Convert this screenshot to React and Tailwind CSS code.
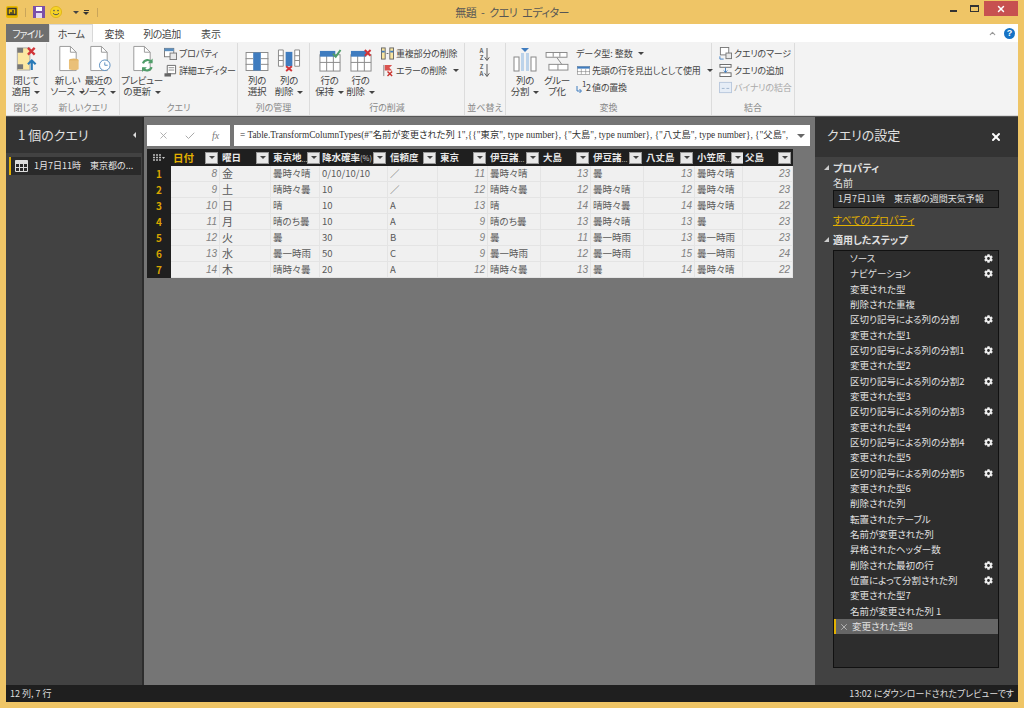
import { X, Check, ChevronUp } from 'lucide-react';
import { FaCog } from 'react-icons/fa';

const jp = '[font-family:"Noto_Sans_CJK_JP","Liberation_Sans",sans-serif] [font-feature-settings:"palt"]';

const colTemplate = 'grid-cols-[24px_49px_51px_49px_68px_50px_50px_53px_50px_53px_51px_48px_50px]';

const columns = [
    { name: '日付', active: true },
    { name: '曜日' },
    { name: '東京地', more: true },
    { name: '降水確率', unit: '(%)' },
    { name: '信頼度' },
    { name: '東京' },
    { name: '伊豆諸', more: true },
    { name: '大島' },
    { name: '伊豆諸', more: true },
    { name: '八丈島' },
    { name: '小笠原', more: true },
    { name: '父島' },
];

const rows = [
    [8, '金', '曇時々晴', '0/10/10/10', '／', 11, '曇時々晴', 13, '曇', 13, '曇時々晴', 23],
    [9, '土', '晴時々曇', '10', '／', 12, '晴時々曇', 12, '曇時々晴', 12, '曇時々晴', 23],
    [10, '日', '晴', '10', 'A', 13, '晴', 14, '晴時々曇', 14, '曇時々晴', 22],
    [11, '月', '晴のち曇', '10', 'A', 9, '晴のち曇', 13, '曇時々晴', 13, '曇', 23],
    [12, '火', '曇', '30', 'B', 9, '曇', 11, '曇一時雨', 13, '曇一時雨', 23],
    [13, '水', '曇一時雨', '50', 'C', 9, '曇一時雨', 12, '曇一時雨', 15, '曇一時雨', 24],
    [14, '木', '晴時々曇', '20', 'A', 12, '晴時々曇', 13, '曇', 14, '曇時々晴', 22],
];

const steps = [
    ['ソース', true],
    ['ナビゲーション', true],
    ['変更された型'],
    ['削除された重複'],
    ['区切り記号による列の分割', true],
    ['変更された型1'],
    ['区切り記号による列の分割1', true],
    ['変更された型2'],
    ['区切り記号による列の分割2', true],
    ['変更された型3'],
    ['区切り記号による列の分割3', true],
    ['変更された型4'],
    ['区切り記号による列の分割4', true],
    ['変更された型5'],
    ['区切り記号による列の分割5', true],
    ['変更された型6'],
    ['削除された列'],
    ['転置されたテーブル'],
    ['名前が変更された列'],
    ['昇格されたヘッダー数'],
    ['削除された最初の行', true],
    ['位置によって分割された列', true],
    ['変更された型7'],
    ['名前が変更された列 1'],
];

const Caret = ({ className = '' }) => (
    <span className={`inline-block ml-1 align-middle w-0 h-0 border-l-[3px] border-r-[3px] border-t-[3px] border-l-transparent border-r-transparent border-t-[#444] ${className}`} />
);

const GridIcon = ({ className = '', head = '#3f7cbf' }) => (
    <svg viewBox="0 0 24 16" className={className}>
        <rect x="0.5" y="0.5" width="23" height="15" fill="#fff" stroke="#777" />
        <rect x="0.5" y="0.5" width="23" height="4" fill={head} />
        <path d="M8 5v10M16 5v10M0 10h24" stroke="#777" fill="none" />
    </svg>
);

const PageIcon = ({ children }) => (
    <svg viewBox="0 0 24 28" className="w-[24px] h-[27px]">
        <path d="M3.5 1.5h11l6 6v19h-17z" fill="#fff" stroke="#999" />
        <path d="M14.5 1.5v6h6" fill="none" stroke="#999" />
        {children}
    </svg>
);

const BigButton = ({ icon, lines, caret, className = '' }) => (
    <div className={`flex flex-col items-center text-[9.5px] tracking-[-0.3px] leading-[11px] text-[#444] shrink-0 ${className}`}>
        <div className="h-[27px] flex items-end justify-center mb-[3px]">{icon}</div>
        <div className="whitespace-nowrap">{lines[0]}</div>
        <div className="whitespace-nowrap">{lines[1]}{caret && <Caret />}</div>
    </div>
);

const SmallButton = ({ icon, text, caret, muted }) => (
    <div className={`flex items-center h-[17px] gap-[2px] text-[9px] tracking-[-0.2px] whitespace-nowrap ${muted ? 'text-[#aaa]' : 'text-[#444]'}`}>
        <span className="w-[14px] h-[14px] flex items-center justify-center shrink-0">{icon}</span>
        <span>{text}</span>
        {caret && <Caret />}
    </div>
);

const Group = ({ label, width, children, last }) => (
    <div className={`flex flex-col shrink-0 h-[72px] ${last ? '' : 'border-r border-[#dcdcdc]'} ${width}`}>
        <div className="flex-1 flex pt-[2px] px-[3px] min-h-0">{children}</div>
        <div className="h-[14px] leading-[14px] text-center text-[9px] text-[#888]">{label}</div>
    </div>
);

const FilterButton = () => (
    <span className="ml-auto mr-[2px] w-[13px] h-[12px] bg-[#e8e8e8] border border-[#999] flex items-center justify-center shrink-0">
        <span className="w-0 h-0 border-l-[3px] border-r-[3px] border-t-[3px] border-l-transparent border-r-transparent border-t-[#444]" />
    </span>
);

const SortIcon = ({ top, bottom }) => (
    <div className="flex items-center gap-[1px]">
        <span className="flex flex-col items-center"><span>{top}</span><span>{bottom}</span></span>
        <svg viewBox="0 0 6 14" className="w-[6px] h-[13px]"><path d="M3 0v13M0.5 10L3 13.5 5.5 10" stroke="#555" fill="none" /></svg>
    </div>
);

const Ribbon = () => (
    <div className="flex h-[74px] bg-[#f3f3f3] border-b border-[#d8d8d8] pt-[1px]">
        <Group label="閉じる" width="w-[41px]">
            <BigButton
                className="w-full"
                lines={['閉じて', '適用']}
                caret
                icon={
                    <svg viewBox="0 0 24 28" className="w-[24px] h-[27px]">
                        <rect x="3" y="3" width="13" height="23" fill="#fbe7a1" stroke="#aaa" />
                        <rect x="3" y="3" width="6" height="5" fill="#777" />
                        <rect x="3" y="20" width="6" height="5" fill="#777" />
                        <path d="M14 3l7 7M21 3l-7 7" stroke="#d13438" strokeWidth="2.4" />
                        <path d="M18 26v-9M14 20l4-4 4 4" stroke="#2a7ab8" strokeWidth="2.2" fill="none" />
                    </svg>
                }
            />
        </Group>
        <Group label="新しいクエリ" width="w-[73px]">
            <div className="flex ml-[2px]">
                <BigButton
                    className="w-[31px]"
                    lines={['新しい', 'ソース']}
                    caret
                    icon={
                        <PageIcon>
                            <ellipse cx="18" cy="16" rx="5" ry="2" fill="#e3b566" />
                            <path d="M13 16v9c0 1.5 10 1.5 10 0v-9z" fill="#eac078" />
                        </PageIcon>
                    }
                />
                <BigButton
                    className="w-[31px]"
                    lines={['最近の', 'ソース']}
                    caret
                    icon={
                        <PageIcon>
                            <circle cx="18" cy="21" r="5.5" fill="#fff" stroke="#5b8fc0" />
                            <path d="M18 18v3h3" stroke="#5b8fc0" fill="none" />
                        </PageIcon>
                    }
                />
            </div>
        </Group>
        <Group label="クエリ" width="w-[118px]">
            <BigButton
                className="w-[38px]"
                lines={['プレビュー', 'の更新']}
                caret
                icon={
                    <PageIcon>
                        <path d="M13 19a5 5 0 0 1 9-1M22 23a5 5 0 0 1-9 1" fill="none" stroke="#4f9d69" strokeWidth="2.2" />
                        <path d="M23 14v5h-5zM12 28v-5h5z" fill="#4f9d69" />
                    </PageIcon>
                }
            />
            <div className="flex flex-col ml-[2px]">
                <SmallButton
                    text="プロパティ"
                    icon={
                        <svg viewBox="0 0 14 14" className="w-[13px] h-[13px]">
                            <rect x="0.5" y="1.5" width="10" height="9" fill="#fff" stroke="#777" />
                            <rect x="0.5" y="1.5" width="10" height="3" fill="#5b8fc0" />
                            <rect x="6.5" y="6.5" width="7" height="7" fill="#e8e8e8" stroke="#777" />
                        </svg>
                    }
                />
                <SmallButton
                    text="詳細エディター"
                    icon={
                        <svg viewBox="0 0 14 14" className="w-[13px] h-[13px]">
                            <path d="M3.5 1.5h9v9h-9z" fill="#fff" stroke="#666" />
                            <path d="M5 4h6M5 6.5h6" stroke="#888" />
                            <rect x="0.5" y="10" width="7" height="3.5" fill="#666" />
                        </svg>
                    }
                />
            </div>
        </Group>
        <Group label="列の管理" width="w-[72px]">
            <div className="flex">
                <BigButton
                    className="w-[32px]"
                    lines={['列の', '選択']}
                    icon={
                        <svg viewBox="0 0 24 20" className="w-[24px] h-[19px] mb-[1px]">
                            <rect x="0.5" y="0.5" width="23" height="19" fill="#fff" stroke="#888" />
                            <rect x="8" y="0.5" width="8" height="19" fill="#3f7cbf" />
                            <path d="M0 7h8M16 7h8M0 13h8M16 13h8" stroke="#888" />
                        </svg>
                    }
                />
                <BigButton
                    className="w-[32px]"
                    lines={['列の', '削除']}
                    caret
                    icon={
                        <svg viewBox="0 0 24 24" className="w-[24px] h-[23px]">
                            <path d="M1 1h5v17H1zM18 1h5v17h-5z" fill="#fff" stroke="#888" />
                            <path d="M1 7h5M1 12h5M18 7h5M18 12h5" stroke="#888" />
                            <rect x="8.5" y="3" width="7" height="15" fill="#3f7cbf" />
                            <path d="M9 18l6 5M15 18l-6 5" stroke="#d13438" strokeWidth="2" />
                        </svg>
                    }
                />
            </div>
        </Group>
        <Group label="行の削減" width="w-[155px]">
            <div className="flex ml-[1px]">
                <BigButton
                    className="w-[31px]"
                    lines={['行の', '保持']}
                    caret
                    icon={
                        <svg viewBox="0 0 24 24" className="w-[24px] h-[23px]">
                            <rect x="1.5" y="6" width="21" height="17" fill="#fff" stroke="#888" />
                            <path d="M8.5 6v17M15.5 6v17M1.5 14h21" stroke="#888" />
                            <rect x="1.5" y="2" width="16" height="6" fill="#3f7cbf" />
                            <path d="M15 5l3 3 5-7" stroke="#4f9d69" strokeWidth="2" fill="none" />
                        </svg>
                    }
                />
                <BigButton
                    className="w-[31px]"
                    lines={['行の', '削除']}
                    caret
                    icon={
                        <svg viewBox="0 0 24 24" className="w-[24px] h-[23px]">
                            <rect x="1.5" y="6" width="21" height="17" fill="#fff" stroke="#888" />
                            <path d="M8.5 6v17M15.5 6v17M1.5 14h21" stroke="#888" />
                            <rect x="1.5" y="2" width="16" height="6" fill="#3f7cbf" />
                            <path d="M16 1l6 6M22 1l-6 6" stroke="#d13438" strokeWidth="2" />
                        </svg>
                    }
                />
            </div>
            <div className="flex flex-col ml-[4px]">
                <SmallButton
                    text="重複部分の削除"
                    icon={
                        <svg viewBox="0 0 14 14" className="w-[13px] h-[13px]">
                            <rect x="0.5" y="1" width="4" height="12" fill="#fbe7a1" stroke="#666" />
                            <rect x="9.5" y="1" width="4" height="12" fill="#fbe7a1" stroke="#666" />
                            <path d="M1 5h3M10 5h3" stroke="#3f7cbf" strokeWidth="2" />
                            <path d="M6 7h2" stroke="#666" />
                        </svg>
                    }
                />
                <SmallButton
                    text="エラーの削除"
                    caret
                    icon={
                        <svg viewBox="0 0 14 14" className="w-[13px] h-[13px]">
                            <path d="M3 1v12" stroke="#888" />
                            <path d="M4 1h8l-3 3 3 3H4z" fill="#d9534f" />
                            <path d="M7 8l5 5M12 8l-5 5" stroke="#c9302c" strokeWidth="1.5" />
                        </svg>
                    }
                />
            </div>
        </Group>
        <Group label="並べ替え" width="w-[41px]">
            <div className="flex flex-col items-center gap-[2px] w-full pt-[2px] text-[#666] text-[6px] leading-[7px] font-bold">
                <SortIcon top="A" bottom="Z" />
                <SortIcon top="Z" bottom="A" />
            </div>
        </Group>
        <Group label="変換" width="w-[206px]">
            <div className="flex">
                <BigButton
                    className="w-[32px]"
                    lines={['列の', '分割']}
                    caret
                    icon={
                        <svg viewBox="0 0 24 24" className="w-[24px] h-[24px]">
                            <rect x="1" y="9" width="5" height="14" fill="#fff" stroke="#888" />
                            <rect x="18" y="9" width="5" height="14" fill="#fff" stroke="#888" />
                            <rect x="8" y="5" width="3" height="18" fill="#bcd3ea" />
                            <rect x="13" y="5" width="3" height="18" fill="#bcd3ea" />
                            <path d="M8 0h8l-4 4z" fill="#3f7cbf" />
                        </svg>
                    }
                />
                <BigButton
                    className="w-[32px]"
                    lines={['グルー', 'プ化']}
                    icon={
                        <svg viewBox="0 0 24 20" className="w-[24px] h-[19px] mb-[1px]">
                            <rect x="0.5" y="0.5" width="22" height="5" fill="#fff" stroke="#888" />
                            <rect x="3.5" y="13" width="20" height="6" fill="#fff" stroke="#888" />
                            <path d="M8 0v5M15 0v5M13 13v6M12 6l5 7" stroke="#888" fill="none" />
                        </svg>
                    }
                />
            </div>
            <div className="flex flex-col ml-[3px]">
                <div className="flex items-center h-[17px] text-[9px] text-[#444] whitespace-nowrap">データ型: 整数<Caret className="ml-[5px]" /></div>
                <SmallButton text="先頭の行を見出しとして使用" caret icon={<GridIcon className="w-[13px] h-[11px]" />} />
                <div className="flex items-center h-[17px] text-[9px] tracking-[-0.2px] whitespace-nowrap text-[#444]">
                    <svg viewBox="0 0 6 14" className="w-[6px] h-[14px] shrink-0"><path d="M1 5v5h4M3.5 8L5.5 10 3.5 12" stroke="#3f7cbf" fill="none" /></svg>
                    <span className="w-[4px] text-[8px] leading-[8px] self-start mt-[1px]">1</span>
                    <span className="w-[6px]">2</span>
                    <span>値の置換</span>
                </div>
            </div>
        </Group>
        <Group label="結合" width="w-[83px]">
            <div className="flex flex-col ml-[3px]">
                <SmallButton
                    text="クエリのマージ"
                    icon={
                        <svg viewBox="0 0 14 14" className="w-[13px] h-[13px]">
                            <rect x="1.5" y="0.5" width="9" height="8" fill="#fff" stroke="#777" />
                            <rect x="7.5" y="6.5" width="6" height="6" fill="#e8e8e8" stroke="#777" />
                            <path d="M1 10v3h4" stroke="#3f7cbf" fill="none" />
                        </svg>
                    }
                />
                <SmallButton
                    text="クエリの追加"
                    icon={
                        <svg viewBox="0 0 14 14" className="w-[13px] h-[13px]">
                            <rect x="1" y="0.5" width="12" height="3" fill="#fff" stroke="#666" />
                            <rect x="1" y="9.5" width="12" height="4" fill="#fff" stroke="#666" />
                            <path d="M7 4v5M5 7l2 2 2-2" stroke="#3f7cbf" fill="none" />
                        </svg>
                    }
                />
                <SmallButton
                    muted
                    text="バイナリの結合"
                    icon={
                        <svg viewBox="0 0 14 14" className="w-[13px] h-[13px]">
                            <rect x="0.5" y="1.5" width="13" height="11" fill="#e6edf6" stroke="#b8c8dc" />
                            <path d="M3 8h3M8 8h3" stroke="#9db2cc" />
                        </svg>
                    }
                />
            </div>
        </Group>
    </div>
);

const Table = () => (
    <div className="text-[9.5px] w-[646px]">
        <div className={`grid ${colTemplate} h-[17px] bg-[#1f1f1f] text-[#e8e8e8] font-bold`}>
            <div className="flex items-center justify-center">
                <svg viewBox="0 0 12 8" className="w-[12px] h-[8px]"><path d="M0 1h8M0 3.5h8M0 6h8" stroke="#bbb" strokeWidth="1.4" strokeDasharray="2 1" /><path d="M9 3h3l-1.5 2z" fill="#ccc" /></svg>
            </div>
            {columns.map((col, i) => (
                <div key={i} className={`flex items-center pl-[2px] whitespace-nowrap overflow-hidden ${col.active ? 'text-[#e3b100] text-[10.5px]' : ''}`}>
                    <span>{col.name}</span>
                    {col.more && <span className="text-[7px] font-normal text-[#bbb] self-end mb-[2px]">...</span>}
                    {col.unit && <span className="text-[7.5px] font-normal text-[#ccc]">{col.unit}</span>}
                    <FilterButton />
                </div>
            ))}
        </div>
        {rows.map((row, r) => (
            <div key={r} className={`grid ${colTemplate} h-[16px] leading-[15px] text-[#5a5a5a] bg-[#f0f0f0]`}>
                <div className="bg-[#1f1f1f] text-[#d9a400] text-center font-bold text-[10px]">{r + 1}</div>
                {row.map((cell, c) =>
                    typeof cell === 'number' ? (
                        <div key={c} className='border-r border-b border-[#e4e4e4] text-right pr-[2px] italic text-[#808080] text-[10px] [font-family:"Liberation_Sans",sans-serif]'>{cell}</div>
                    ) : (
                        <div key={c} className={`border-r border-b border-[#e4e4e4] pl-[2px] whitespace-nowrap ${c === 1 ? 'text-[11px]' : ''}`}>{cell}</div>
                    )
                )}
            </div>
        ))}
    </div>
);

export default function App() {
    return (
        <div className={`w-[1024px] h-[708px] overflow-hidden flex flex-col bg-[#efc566] px-[6px] pb-[6px] ${jp}`}>
            {/* title bar */}
            <div className="h-[24px] flex items-center text-[#555] shrink-0">
                <div className="flex-1 flex items-center gap-[7px]">
                    <svg viewBox="0 0 12 12" className="w-[12px] h-[12px]"><rect width="12" height="12" rx="2" fill="#e8b800" /><path d="M2 2.5h8v6H2z" fill="none" stroke="#333" strokeWidth="1.4" /><path d="M5 6v3M7 4v5" stroke="#333" strokeWidth="1.4" /></svg>
                    <span className="w-px h-[9px] bg-[#c9a55a]" />
                    <svg viewBox="0 0 12 12" className="w-[12px] h-[12px]"><rect width="12" height="12" fill="#7b4fa8" /><rect x="3" y="1" width="6" height="4" fill="#fff" /><rect x="3" y="7" width="6" height="5" fill="#e4d8ef" /></svg>
                    <svg viewBox="0 0 12 12" className="w-[12px] h-[12px] -ml-[2px]"><circle cx="6" cy="6" r="5.6" fill="#f5d327" stroke="#d6a900" strokeWidth="0.6" /><circle cx="4" cy="4.6" r="0.8" fill="#555" /><circle cx="8" cy="4.6" r="0.8" fill="#555" /><path d="M3 7.2c1 2 5 2 6 0" stroke="#555" fill="none" /></svg>
                    <Caret className="-ml-[6px]" />
                    <span className="flex flex-col items-center gap-[1px] -ml-[3px]">
                        <span className="w-[5px] h-px bg-[#333]" />
                        <span className="w-0 h-0 border-l-[3px] border-r-[3px] border-t-[3px] border-l-transparent border-r-transparent border-t-[#333]" />
                    </span>
                    <span className="w-px h-[9px] bg-[#c9a55a] ml-[1px]" />
                </div>
                <div className="text-[11px] tracking-[-0.5px] [word-spacing:3px] text-[#555] whitespace-nowrap">無題 - クエリ エディター</div>
                <div className="flex-1 flex items-start justify-end h-full">
                    <span className="w-[7px] h-[2px] bg-[#333] mt-[10px] mr-[13px]" />
                    <span className="w-[9px] h-[7px] border border-t-2 border-[#333] mt-[5px] mr-[5px]" />
                    <div className="w-[34px] h-[15px] mt-[1px] bg-[#c75050] flex items-center justify-center">
                        <X className="w-[10px] h-[10px] text-white" strokeWidth={3.5} />
                    </div>
                </div>
            </div>
            {/* tabs */}
            <div className="h-[18px] flex bg-white items-stretch text-[10px] text-[#444] shrink-0 whitespace-nowrap">
                <div className="w-[43px] bg-[#6f6f6f] text-[#eee] flex items-center justify-center tracking-[-1px]">ファイル</div>
                <div className="w-[44px] bg-[#f3f3f3] border-x border-t border-[#d8d8d8] flex items-center justify-center tracking-[-0.7px]">ホーム</div>
                <div className="w-[43px] flex items-center justify-center">変換</div>
                <div className="w-[52px] flex items-center justify-center tracking-[-0.5px]">列の追加</div>
                <div className="w-[46px] flex items-center justify-center">表示</div>
                <div className="ml-auto flex items-center gap-[7px] pr-[3px]">
                    <ChevronUp className="w-[9px] h-[9px] text-[#999]" strokeWidth={3} />
                    <span className='w-[11px] h-[11px] rounded-full bg-[#1673c5] text-white text-[9px] leading-[11px] font-bold text-center [font-family:"Liberation_Sans",sans-serif]'>?</span>
                </div>
            </div>
            <Ribbon />
            {/* body */}
            <div className="flex-1 flex min-h-0 border-t border-[#555]">
                {/* queries */}
                <div className="w-[138px] shrink-0 bg-[#424242] border-r-2 border-[#2d2d2d] flex flex-col">
                    <div className="h-[36px] bg-[#333] flex items-center justify-between pl-[12px] pr-[6px] text-[13px] text-[#e0e0e0]">
                        <span>1 個のクエリ</span>
                        <span className="w-0 h-0 border-y-[3px] border-r-[3px] border-y-transparent border-r-[#ddd]" />
                    </div>
                    <div className="mt-[4px] h-[18px] ml-[3px] mr-[1px] bg-[#2a2a2a] border-l-2 border-[#e3b100] flex items-center pl-[4px] gap-[6px] text-[9px] text-[#e4e4e4] whitespace-nowrap overflow-hidden">
                        <svg viewBox="0 0 13 12" className="w-[13px] h-[12px] shrink-0"><path d="M0.5 0.5h12v11h-12zM0.5 3.5h12M0.5 7.5h12M4.5 0.5v11M8.5 0.5v11" fill="none" stroke="#ddd" /><rect x="0.5" y="0.5" width="12" height="3" fill="#ddd" /></svg>
                        <span>1月7日11時　東京都の...</span>
                    </div>
                </div>
                {/* center */}
                <div className="flex-1 min-w-0 bg-[#757575] pl-[3px] pt-[8px]">
                    <div className="flex gap-[4px] h-[21px] w-[663px]">
                        <div className="w-[83px] bg-white flex items-center justify-around px-[3px] text-[#aaa]">
                            <X className="w-[11px] h-[11px]" />
                            <Check className="w-[12px] h-[12px]" />
                            <span className='text-[10px] italic text-[#777] [font-family:"Liberation_Serif",serif]'>fx</span>
                        </div>
                        <div className='flex-1 min-w-0 bg-white flex items-center pl-[6px] text-[9.3px] text-[#333] whitespace-nowrap [font-family:"Liberation_Serif","Noto_Sans_CJK_JP",serif]'>
                            <span className="flex-1 min-w-0 overflow-hidden">= Table.TransformColumnTypes(#"名前が変更された列 1",{'{'}{'{'}"東京", type number{'}'}, {'{'}"大島", type number{'}'}, {'{'}"八丈島", type number{'}'}, {'{'}"父島",</span>
                            <span className="shrink-0 w-[18px] flex justify-center">
                                <span className="w-0 h-0 border-l-[4px] border-r-[4px] border-t-[4px] border-l-transparent border-r-transparent border-t-[#666]" />
                            </span>
                        </div>
                    </div>
                    <div className="mt-[3px]">
                        <Table />
                    </div>
                </div>
                {/* settings */}
                <div className="w-[203px] shrink-0 bg-[#424242] flex flex-col text-[#e0e0e0]">
                    <div className="h-[40px] bg-[#333] flex items-center justify-between pl-[12px] pr-[16px] text-[13px] shrink-0">
                        <span className="-mt-[4px]">クエリの設定</span>
                        <X className="w-[12px] h-[12px] text-white" strokeWidth={4} />
                    </div>
                    <div className="pl-[18px] pr-[19px] text-[10px] pt-[3px]">
                        <div className="flex items-center font-bold h-[15px] relative">
                            <span className="absolute -left-[9px] w-0 h-0 border-b-[5px] border-l-[5px] border-l-transparent border-b-[#ccc]" />
                            プロパティ
                        </div>
                        <div className="h-[15px] leading-[15px]">名前</div>
                        <div className="h-[18px] bg-[#2d2d2d] border border-[#111] leading-[16px] text-[9px] pl-[4px] whitespace-nowrap overflow-hidden">1月7日11時　東京都の週間天気予報</div>
                        <div className="mt-[4px] text-[#e3b100] underline leading-[15px]">すべてのプロパティ</div>
                        <div className="flex items-center font-bold h-[15px] mt-[5px] relative">
                            <span className="absolute -left-[9px] w-0 h-0 border-b-[5px] border-l-[5px] border-l-transparent border-b-[#ccc]" />
                            適用したステップ
                        </div>
                        <div className="mt-[3px] h-[418px] bg-[#2d2d2d] border border-[#111] text-[9.5px]">
                            {steps.map(([name, gear], i) => (
                                <div key={i} className="h-[15.33px] leading-[15px] flex items-center pl-[16px] pr-[5px] whitespace-nowrap">
                                    <span>{name}</span>
                                    {gear && <FaCog className="ml-auto w-[9px] h-[9px] text-[#eee]" />}
                                </div>
                            ))}
                            <div className="h-[15.33px] bg-[#666] border-l-2 border-[#e3b100] flex items-center pl-[3px] gap-[3px]">
                                <X className="w-[10px] h-[10px] text-[#ddd]" strokeWidth={1.5} />
                                <span>変更された型8</span>
                            </div>
                        </div>
                    </div>
                </div>
            </div>
            {/* status bar */}
            <div className="h-[17px] bg-[#1f1f1f] text-[#ddd] text-[9px] flex items-center justify-between px-[4px] shrink-0">
                <span>12 列, 7 行</span>
                <span>13:02 にダウンロードされたプレビューです</span>
            </div>
        </div>
    );
}
